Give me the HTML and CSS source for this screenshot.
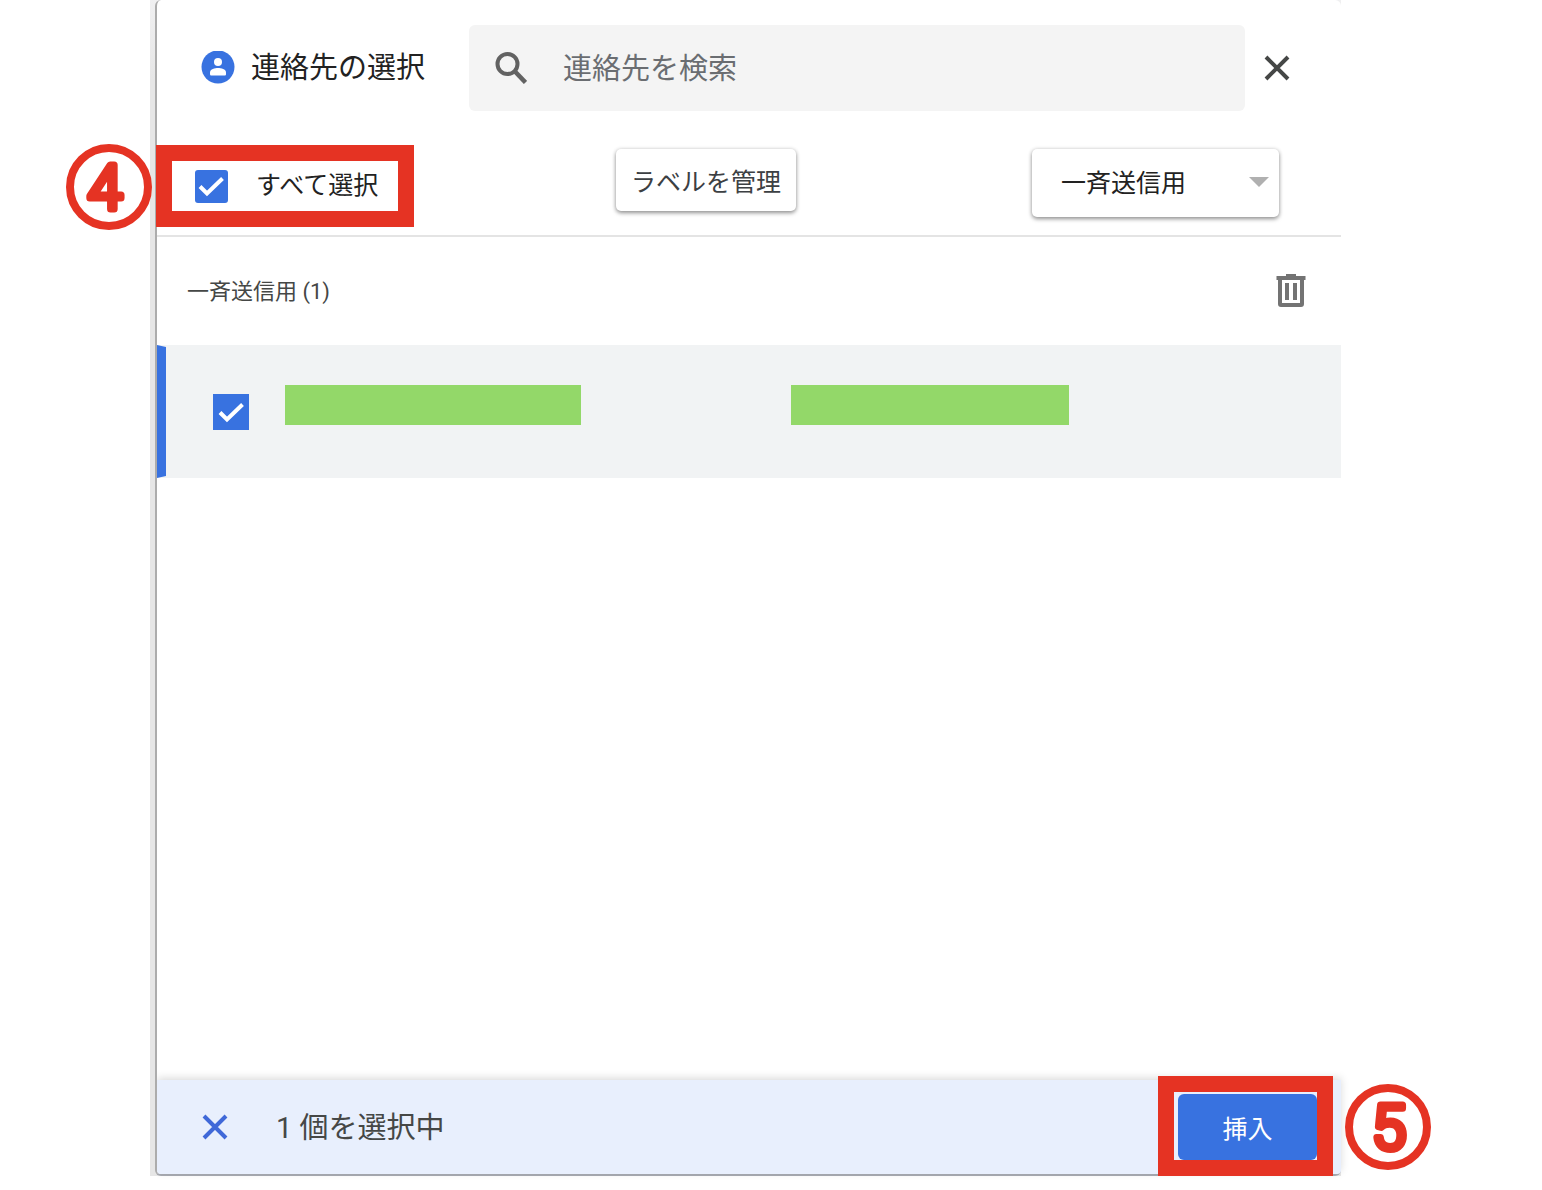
FILE: index.html
```html
<!DOCTYPE html>
<html lang="ja">
<head>
  <meta charset="UTF-8">
  <meta name="viewport" content="width=device-width, initial-scale=1.0">
  <title>連絡先の選択</title>
  <link rel="stylesheet" href="styles.css">
</head>
<body>
  <div class="backdrop">
    <main class="dialog">
      <!-- Title and search -->
      <header class="header">
        <svg class="contact-icon" viewBox="0 0 34 34" aria-hidden="true">
          <circle cx="17" cy="16" r="16.500" fill="#3872e0"/>
          <circle cx="17" cy="11" r="4" fill="#fff"/>
          <path d="M9 21.500c0-3.500 5-4.500 8-4.500s8 1 8 4.500V23c0 1-.500 1.500-1.500 1.500h-13C9.500 24.500 9 24 9 23z" fill="#fff"/>
        </svg>
        <h1>連絡先の選択</h1>
        <div class="search">
          <svg class="search-icon" viewBox="0 0 32 32" fill="none" stroke="#626262" stroke-width="4" aria-hidden="true">
            <circle cx="12.500" cy="12" r="10"/>
            <path d="M19.500 19l11 11.500" stroke-width="4.500"/>
          </svg>
          <input type="text" placeholder="連絡先を検索" aria-label="連絡先を検索">
        </div>
        <button class="icon-button close" aria-label="閉じる">
          <svg class="cross" viewBox="0 0 26 26" aria-hidden="true"><path d="M2 2l22 22M24 2L2 24"/></svg>
        </button>
      </header>

      <!-- Select all, labels and filter -->
      <div class="toolbar">
        <div class="highlight select-all">
          <input type="checkbox" id="selectAll" checked>
          <label for="selectAll">すべて選択</label>
          <svg class="badge badge-four" viewBox="0 0 86 86">
            <circle cx="43" cy="43" r="39"/>
            <text x="39" y="65">4</text>
          </svg>
        </div>
        <button class="manage">ラベルを管理</button>
        <div class="filter">
          <select aria-label="ラベル">
            <option>一斉送信用</option>
          </select>
        </div>
      </div>

      <div class="group">
        <h2>一斉送信用 (1)</h2>
        <button class="icon-button" aria-label="削除">
          <svg class="trash" viewBox="0 0 30 34" fill="#737373" aria-hidden="true">
            <path fill-rule="evenodd" d="M10 0h10v2h9.500v4H28v24a3 3 0 0 1-3 3H5a3 3 0 0 1-3-3V6H.500V2H10zM6 6v23h18V6z"/>
            <path d="M9 9h4v17H9zM17 9h4v17h-4z"/>
          </svg>
        </button>
      </div>

      <ul class="contacts">
        <li class="contact">
          <input type="checkbox" aria-label="連絡先" checked>
          <span class="masked name"></span>
          <span class="masked email"></span>
        </li>
      </ul>

      <!-- Selection bar -->
      <footer class="selection">
        <button class="icon-button" aria-label="選択を解除">
          <svg class="cross blue" viewBox="0 0 26 26" aria-hidden="true"><path d="M2 2l22 22M24 2L2 24"/></svg>
        </button>
        <span class="count">1 個を選択中</span>
        <div class="insert-wrap">
          <button class="insert">挿入</button>
          <div class="highlight frame"></div>
          <svg class="badge badge-five" viewBox="0 0 86 86">
            <circle cx="43" cy="43" r="39"/>
            <text x="44" y="65">5</text>
          </svg>
        </div>
      </footer>
    </main>
  </div>
</body>
</html>
```
FILE: styles.css
```css
* {
  box-sizing: border-box;
}

body {
  margin: 0;
  background: #fff;
  color: #222;
  font-family: Roboto, "Noto Sans CJK JP", sans-serif;
}

h1,
h2 {
  margin: 0;
  font-weight: 400;
}

button,
input,
select {
  margin: 0;
  font-family: inherit;
}

svg {
  display: block;
}

.backdrop {
  margin: 0 201px 14px 150px;
  padding-left: 5px;
  background: linear-gradient(#f0f0f1, #e6e6e6 80px);
}

.dialog {
  display: flex;
  flex-direction: column;
  min-height: calc(100vh - 14px);
  background: #fff;
  border-left: 2px solid #acacac;
  border-bottom: 2px solid #a9acb3;
  border-radius: 6px;
}

.header {
  display: flex;
  align-items: center;
  padding: 25px 50px 0 44px;
}

.contact-icon {
  width: 34px;
  height: 34px;
  margin-right: 16px;
}

h1 {
  font-size: 29px;
  line-height: 40px;
  white-space: nowrap;
}

.search {
  display: flex;
  align-items: center;
  flex: 1;
  height: 86px;
  margin: 0 18px 0 44px;
  padding: 0 26px;
  background: #f4f4f4;
  border-radius: 6px;
}

.search-icon {
  width: 32px;
  height: 32px;
  flex: none;
}

.search input {
  flex: 1;
  min-width: 0;
  margin-left: 36px;
  padding: 2px 0 0;
  border: none;
  outline: none;
  background: none;
  font-size: 29px;
  line-height: 40px;
}

.search input::placeholder {
  color: #6a6d71;
  opacity: 1;
}

.icon-button {
  padding: 0;
  border: none;
  background: none;
  cursor: pointer;
}

.cross {
  width: 26px;
  height: 26px;
  margin: 1px;
  fill: none;
  stroke: #454746;
  stroke-width: 4;
}

.cross.blue {
  stroke: #3f68d8;
}

input[type="checkbox"] {
  appearance: none;
  flex: none;
  width: 33px;
  height: 33px;
  border-radius: 3px;
  background: #fff;
  border: 3px solid #737373;
}

input[type="checkbox"]:checked {
  border: none;
  background: #3872e0 url("data:image/svg+xml,%3Csvg xmlns='http://www.w3.org/2000/svg' viewBox='0 0 33 33'%3E%3Cpath d='M5 16.500l7 7L27.500 8.500' fill='none' stroke='white' stroke-width='4'/%3E%3C/svg%3E") center / 33px 33px no-repeat;
}

.toolbar {
  display: flex;
  align-items: flex-start;
  height: 126px;
  padding: 34px 62px 0 0;
  border-bottom: 2px solid #e4e4e4;
  font-size: 25px;
}

.highlight {
  border: 16px solid #e53323;
}

.select-all {
  position: relative;
  display: flex;
  align-items: center;
  width: 258px;
  height: 82px;
  margin-left: -1px;
  padding-left: 23px;
}

.select-all label {
  margin-left: 28px;
  line-height: 36px;
}

.badge {
  position: absolute;
  width: 86px;
  height: 86px;
  fill: none;
  stroke: #e53323;
  stroke-width: 8;
}

.badge text {
  fill: #e53323;
  stroke-width: 7;
  stroke-linejoin: round;
  font-family: Roboto, sans-serif;
  font-size: 62px;
  font-weight: 300;
  text-anchor: middle;
}

.badge-four {
  top: -17px;
  left: -106px;
}

.badge-five {
  top: -10px;
  left: 167px;
}

.manage,
.filter {
  margin-top: 4px;
  border: none;
  border-radius: 5px;
  background: #fff;
  box-shadow: 0 2px 4px rgba(0, 0, 0, 0.4), 0 0 4px rgba(0, 0, 0, 0.12);
}

.manage {
  height: 62px;
  margin-left: 202px;
  padding: 0 15px;
  color: #3c4043;
  font-size: 25px;
  cursor: pointer;
}

.filter {
  position: relative;
  width: 247px;
  height: 68px;
  margin-left: auto;
}

.filter select {
  appearance: none;
  width: 100%;
  height: 100%;
  padding: 0 40px 0 29px;
  border: none;
  background: none;
  color: #222;
  font-size: 25px;
}

.filter::after {
  content: "";
  position: absolute;
  top: 28px;
  right: 10px;
  border: 10px solid transparent;
  border-top-color: #b0b0b0;
  border-bottom: none;
  pointer-events: none;
}

.group {
  display: flex;
  align-items: center;
  justify-content: space-between;
  height: 108px;
  padding: 0 35px 0 30px;
  color: #454746;
}

.group h2 {
  padding-bottom: 4px;
  font-size: 22px;
}

.trash {
  width: 30px;
  height: 34px;
}

.contacts {
  flex: 1;
  margin: 0;
  padding: 0;
  list-style: none;
}

.contact {
  display: grid;
  grid-template-columns: 36px 296px 278px;
  align-items: start;
  height: 133px;
  padding: 38px 0 0 47px;
  border: 2px solid #f1f3f4;
  border-left: 9px solid #3872e0;
  border-right: none;
  background: #f1f3f4;
}

.contact input[type="checkbox"] {
  width: 36px;
  height: 36px;
  margin-top: 9px;
  border-radius: 0;
}

.masked {
  height: 40px;
  background: #93d869;
}

.name {
  margin-left: 36px;
  margin-right: -36px;
}

.email {
  margin-left: 246px;
  margin-right: -246px;
}

.selection {
  display: flex;
  align-items: center;
  height: 94px;
  padding: 0 24px 0 44px;
  background: #e8effd;
  border-radius: 0 0 4px 4px;
  box-shadow: 0 -2px 8px rgba(0, 0, 0, 0.15);
  clip-path: inset(-20px -100px -20px 0);
}

.count {
  flex: 1;
  margin-left: 47px;
  padding-bottom: 4px;
  color: #454746;
  font-size: 29px;
}

.insert-wrap {
  position: relative;
}

.insert {
  display: block;
  width: 139px;
  height: 66px;
  border: none;
  border-radius: 6px;
  background: #3872e0;
  color: #fff;
  font-size: 25px;
  cursor: pointer;
}

.frame {
  position: absolute;
  inset: -18px -16px -16px -20px;
  pointer-events: none;
}
```
